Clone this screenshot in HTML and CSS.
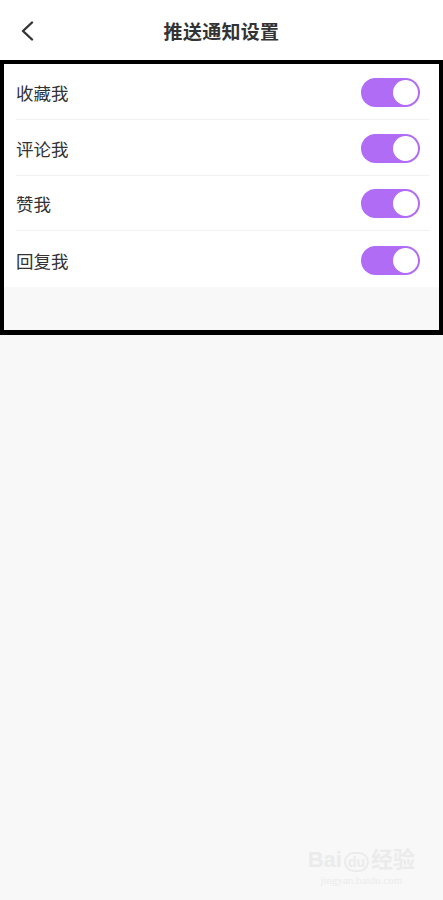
FILE: index.html
```html
<!DOCTYPE html>
<html lang="zh-CN">
<head>
    <meta charset="UTF-8">
    <meta name="viewport" content="width=device-width, initial-scale=1.0">
    <title>推送通知设置</title>
    <link rel="stylesheet" href="styles.css">
</head>
<body>

    <header class="top-bar">
        <a class="back-btn" href="#">
            <svg width="14" height="20" viewBox="0 0 14 20">
                <path d="M12 1.5 L3 10 L12 18.5" fill="none" stroke="#333" stroke-width="2.4" stroke-linecap="round" stroke-linejoin="round"/>
            </svg>
        </a>
        <h1 class="title">推送通知设置</h1>
        <span></span>
    </header>

    <section class="settings-box">
        <ul class="setting-list">
            <li class="setting-item">
                <span class="setting-label">收藏我</span>
                <span class="switch on"><span class="knob"></span></span>
            </li>
            <li class="setting-item">
                <span class="setting-label">评论我</span>
                <span class="switch on"><span class="knob"></span></span>
            </li>
            <li class="setting-item">
                <span class="setting-label">赞我</span>
                <span class="switch on"><span class="knob"></span></span>
            </li>
            <li class="setting-item">
                <span class="setting-label">回复我</span>
                <span class="switch on"><span class="knob"></span></span>
            </li>
        </ul>
        <div class="box-footer"></div>
    </section>

    <!-- filigrane -->
    <div class="watermark">
        <div class="wm-logo">Bai<span class="wm-du">du</span>经验</div>
        <div class="wm-url">jingyan.baidu.com</div>
    </div>

</body>
</html>
```

FILE: styles.css
```css
body {
    margin: 0;
    background-color: #f8f8f8;
    font-family: "Noto Sans CJK SC", "Noto Sans", sans-serif;
    color: #333;
    min-height: 900px;
    position: relative;
}
.top-bar {
    height: 60px;
    background-color: #fff;
    display: grid;
    grid-template-columns: 1fr auto 1fr;
    align-items: center;
}
.back-btn {
    display: flex;
    align-items: center;
    padding-left: 20px;
    padding-top: 2px;
}
.title {
    margin: 0;
    font-size: 19px;
    font-weight: 700;
    color: #333;
    letter-spacing: 0.3px;
}
.settings-box {
    border: 4px solid #000;
    border-bottom-width: 5px;
    background-color: #f8f8f8;
}
.setting-list {
    list-style: none;
    margin: 0;
    padding: 0;
    background-color: #fff;
}
.setting-item {
    height: 55.75px;
    box-sizing: border-box;
    margin: 0 10px 0 12px;
    padding-right: 9px;
    padding-top: 2px;
    display: flex;
    align-items: center;
    justify-content: space-between;
    border-bottom: 1px solid #f1f1f1;
}
.setting-item:last-child {
    border-bottom: none;
}
.setting-label {
    font-size: 17.5px;
    color: #333;
}
.switch {
    width: 59px;
    height: 29px;
    border-radius: 15px;
    background-color: #ddd;
    display: flex;
    align-items: center;
    padding: 0 2px;
    box-sizing: border-box;
}
.switch.on {
    background-color: #b06cf4;
    justify-content: flex-end;
}
.knob {
    width: 25px;
    height: 25px;
    border-radius: 50%;
    background-color: #fff;
}
.box-footer {
    height: 43px;
}
.watermark {
    position: absolute;
    right: 28px;
    bottom: 14px;
    color: #ebebeb;
    text-align: center;
    font-family: "Liberation Sans", "Noto Sans CJK SC", sans-serif;
}
.wm-logo {
    font-size: 22px;
    font-weight: 700;
    line-height: 24px;
}
.wm-du {
    font-size: 14px;
    border: 2px solid #ebebeb;
    border-radius: 10px;
    padding: 0 2px;
    margin: 0 2px;
}
.wm-url {
    font-size: 11px;
    font-family: "Liberation Serif", serif;
}
```
